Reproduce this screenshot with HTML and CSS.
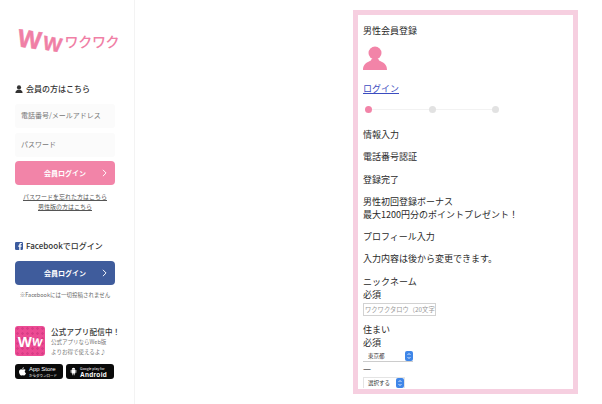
FILE: index.html
```html
<!DOCTYPE html>
<html lang="ja">
<head>
<meta charset="utf-8">
<title>男性会員登録</title>
<link rel="stylesheet" href="styles.css">
</head>
<body>
<aside class="side">
  <div class="logo"><span class="w1">W</span><span class="w2">W</span><span class="kana">ワクワク</span></div>

  <h2 class="head member"><svg class="ico" viewBox="0 0 10 10"><circle cx="5" cy="3" r="2.6" fill="#333"/><path d="M0.5 10c0-3 2-3.4 3-4h3c1 .6 3 1 3 4z" fill="#333"/></svg>会員の方はこちら</h2>
  <div class="field">電話番号/メールアドレス</div>
  <div class="field">パスワード</div>
  <a class="btn pink"><span>会員ログイン</span><svg class="chev" viewBox="0 0 6 10"><path d="M1 1l4 4-4 4" fill="none" stroke="#fff" stroke-width="1.2"/></svg></a>
  <div class="links"><a>パスワードを忘れた方はこちら</a><a>男性版の方はこちら</a></div>

  <h2 class="head fb"><svg class="ico" viewBox="0 0 10 10"><rect width="10" height="10" rx="1.5" fill="#3b5b9e"/><path d="M7 10V6h1.2l.2-1.6H7v-1c0-.5.2-.8.8-.8h.7V1.200H7.300C6 1.200 5.300 2 5.300 3.200v1.200H4V6h1.300v4z" fill="#fff"/></svg>Facebookでログイン</h2>
  <a class="btn blue"><span>会員ログイン</span><svg class="chev" viewBox="0 0 6 10"><path d="M1 1l4 4-4 4" fill="none" stroke="#fff" stroke-width="1.2"/></svg></a>
  <p class="note">※Facebookには一切投稿されません</p>

  <div class="app">
    <div class="appicon"><span class="a1">W</span><span class="a2">W</span></div>
    <div class="apptext"><b>公式アプリ配信中！</b><small>公式アプリならWeb版</small><small>よりお得で使えるよ♪</small></div>
  </div>
  <div class="stores">
    <div class="store"><svg class="sico" viewBox="0 0 10 12"><path d="M7 0c0 1.300-1 2.400-2.200 2.400C4.800 1.200 5.800.1 7 0zM5 3.200c.7 0 1.300-.5 2.300-.5.800 0 1.700.4 2.200 1.200-2 1.200-1.600 3.800.5 4.600-.6 1.500-1.600 3.300-2.700 3.300-.8 0-1-.5-2-.5s-1.300.5-2 .5C1.800 11.800 0 9 0 6.500 0 4 1.600 2.800 3 2.800c.8 0 1.500.4 2 .4z" fill="#fff"/></svg><div class="stext"><b>App Store</b><i>からダウンロード</i></div></div>
    <div class="store"><svg class="sico" viewBox="0 0 10 12"><path d="M2.500 3.500h5V9H6.500v2.200h-1V9h-1v2.200h-1V9h-1zM1 3.700h1v4H1zM8 3.700h1v4H8zM2.500 3a2.500 2.500 0 015 0z" fill="#fff"/></svg><div class="stext"><i>Google play for</i><b class="and">Android</b></div></div>
  </div>
</aside>

<main class="main">
  <section class="frame">
    <div class="scroll">
      <p class="title">男性会員登録</p>
      <svg class="person" viewBox="0 0 24 24"><circle cx="12" cy="7" r="6.500" fill="#f284a8"/><path d="M0 24c0-4.500 2-6.500 5-8 2-1 3.500-1.500 3.500-3h7c0 1.500 1.500 2 3.500 3 3 1.500 5 3.500 5 8z" fill="#f284a8"/></svg>
      <p class="login"><a href="#">ログイン</a></p>
      <div class="steps"><i class="dot on"></i><i class="bar"></i><i class="dot"></i><i class="bar"></i><i class="dot"></i></div>
      <p>情報入力</p>
      <p>電話番号認証</p>
      <p>登録完了</p>
      <p>男性初回登録ボーナス<br>最大1200円分のポイントプレゼント！</p>
      <p>プロフィール入力</p>
      <p>入力内容は後から変更できます。</p>
      <div class="line">ニックネーム</div>
      <div class="line">必須</div>
      <div class="input">ワクワクタロウ（20文字</div>
      <div class="line gap">住まい</div>
      <div class="line">必須</div>
      <div class="select"><span class="seltext">東京都</span><svg class="arrows" viewBox="0 0 8 10"><rect width="8" height="10" rx="2" fill="#3f86e8"/><path d="M2.500 4L4 2.500 5.500 4M2.500 6L4 7.500 5.500 6" fill="none" stroke="#fff" stroke-width=".8"/></svg></div>
      <div class="line">—</div>
      <div class="select short"><span class="seltext">選択する</span><svg class="arrows" viewBox="0 0 8 10"><rect width="8" height="10" rx="2" fill="#3f86e8"/><path d="M2.500 4L4 2.500 5.500 4M2.500 6L4 7.500 5.500 6" fill="none" stroke="#fff" stroke-width=".8"/></svg></div>
    </div>
  </section>
</main>
</body>
</html>
```

FILE: styles.css
```css
* { box-sizing: border-box; }
html, body { margin: 0; height: 404px; overflow: hidden; background: #fff; }
body {
  display: flex;
  font-family: "Noto Sans CJK JP", "Liberation Sans", sans-serif;
  color: #222;
}
.side {
  width: 135px;
  height: 404px;
  flex: none;
  border-right: 1px solid #f3f3f3;
  padding: 26px 19px 0 15px;
}
.logo {
  display: flex;
  align-items: flex-end;
  height: 24px;
  margin-left: 3px;
  color: #f07fa6;
  font-family: "Liberation Sans", sans-serif;
  font-weight: 700;
  white-space: nowrap;
}
.w1 { font-size: 25px; line-height: 22px; transform: rotate(8deg); -webkit-text-stroke: .5px #f07fa6; }
.w2 { font-size: 20px; line-height: 18px; transform: translateY(3px) rotate(10deg); margin-left: 1px; -webkit-text-stroke: .4px #f07fa6; }
.kana { font-family: "Noto Sans CJK JP", sans-serif; font-size: 14px; line-height: 18px; margin-left: 3px; letter-spacing: -.3px; font-weight: 500; }
.head {
  display: flex;
  align-items: center;
  gap: 3px;
  margin: 0;
  font-size: 8px;
  font-weight: 500;
  line-height: 12px;
  color: #333;
}
.member { margin-top: 33px; }
.fb { margin-top: 28px; }
.ico { width: 8px; height: 8px; flex: none; }
.field {
  height: 24px;
  margin-top: 9px;
  padding-left: 6px;
  background: #fbfbfb;
  border-radius: 3px;
  font-size: 7px;
  line-height: 23px;
  color: #777;
  white-space: nowrap;
}
.field + .field { margin-top: 5px; }
.btn {
  display: flex;
  align-items: center;
  justify-content: center;
  position: relative;
  height: 24px;
  width: 100px;
  border-radius: 4px;
  color: #fff;
  font-size: 7px;
  font-weight: 700;
}
.btn span { display: block; }
.chev { width: 5px; height: 8px; position: absolute; right: 8px; top: 8px; }
.pink { margin-top: 4px; background: #f284a8; }
.blue { margin-top: 9px; background: #3f5c9c; }
.links {
  display: flex;
  flex-direction: column;
  align-items: center;
  width: 100px;
  margin-top: 7px;
  font-size: 6px;
  line-height: 10px;
  color: #555;
  white-space: nowrap;
}
.links a { text-decoration: underline; }
.note {
  margin: 5px 0 0;
  width: 100px;
  text-align: center;
  font-size: 5.500px;
  line-height: 10px;
  color: #666;
  white-space: nowrap;
}
.app { display: flex; gap: 6px; margin-top: 26px; }
.appicon {
  width: 30px;
  height: 30px;
  flex: none;
  display: flex;
  align-items: center;
  justify-content: center;
  background: radial-gradient(circle, #d93d86 1px, transparent 1.500px) 0 0 / 5px 5px, #ec4b93;
  border-radius: 3px;
  color: #fff;
  font-family: "Liberation Sans", sans-serif;
  font-weight: 700;
}
.a1 { font-size: 15px; }
.a2 { font-size: 11px; transform: translateY(1px) rotate(8deg); }
.apptext { display: flex; flex-direction: column; width: 64px; white-space: nowrap; }
.apptext b { font-size: 7.500px; font-weight: 500; line-height: 11px; color: #333; letter-spacing: .2px; }
.apptext small { font-size: 5.500px; line-height: 10px; color: #777; }
.stores { display: flex; gap: 3px; margin-top: 7px; }
.store {
  width: 48px;
  height: 15px;
  display: flex;
  align-items: center;
  gap: 3px;
  padding-left: 4px;
  background: #0a0a0a;
  border-radius: 3px;
  color: #fff;
}
.sico { width: 7px; height: 9px; flex: none; }
.stext { display: flex; flex-direction: column; font-family: "Liberation Sans", "Noto Sans CJK JP", sans-serif; white-space: nowrap; }
.stext b { font-size: 6px; line-height: 7px; font-weight: 400; }
.stext i { font-size: 3.500px; line-height: 5px; font-style: normal; font-family: "Noto Sans CJK JP", sans-serif; }
.stext .and { font-size: 6.500px; font-weight: 700; letter-spacing: .3px; }
.main { flex: 1; padding: 10px 0 0 218px; }
.frame {
  width: 225px;
  height: 384px;
  border: 5px solid #f6cfe0;
  background: #fff;
  overflow: hidden;
}
.scroll {
  height: 374px;
  overflow: hidden;
  padding-left: 5px;
  font-size: 9px;
  line-height: 13px;
  color: #2a2a2a;
}
.scroll p { margin: 9.300px 0; }
.scroll .title { margin: 9px 0 0; }
.person { display: block; width: 24px; height: 24px; margin-top: 9px; }
.scroll .login { margin: 12px 0 0; }
.login a { color: #3b4cc0; text-decoration: underline; }
.steps { display: flex; align-items: center; width: 134px; height: 8px; margin: 10px 0 15px 2px; }
.dot { width: 7px; height: 7px; border-radius: 50%; background: #e2e2e2; flex: none; }
.dot.on { background: #f284a8; }
.bar { flex: 1; height: 1px; background: #f2f2f2; }
.line { line-height: 13.500px; }
.gap { margin-top: 7px; }
.input {
  width: 73px;
  height: 13px;
  margin-top: 1px;
  border: 1px solid #d2d2d2;
  font-size: 6.300px;
  line-height: 11px;
  padding-left: 1px;
  color: #999;
  white-space: nowrap;
}
.select {
  display: flex;
  justify-content: space-between;
  align-items: flex-start;
  width: 50px;
  height: 11px;
  margin: 1px 0 0;
  border-bottom: 1px solid #ccc;
  font-size: 5.500px;
  line-height: 10px;
  padding-left: 5px;
}
.select.short { width: 42px; height: 11px; margin-top: 2px; border: 1px solid #e4e4e4; border-bottom: 0; padding-left: 4px; }
.seltext { white-space: nowrap; color: #333; }
.arrows { width: 8px; height: 10px; flex: none; }
```
